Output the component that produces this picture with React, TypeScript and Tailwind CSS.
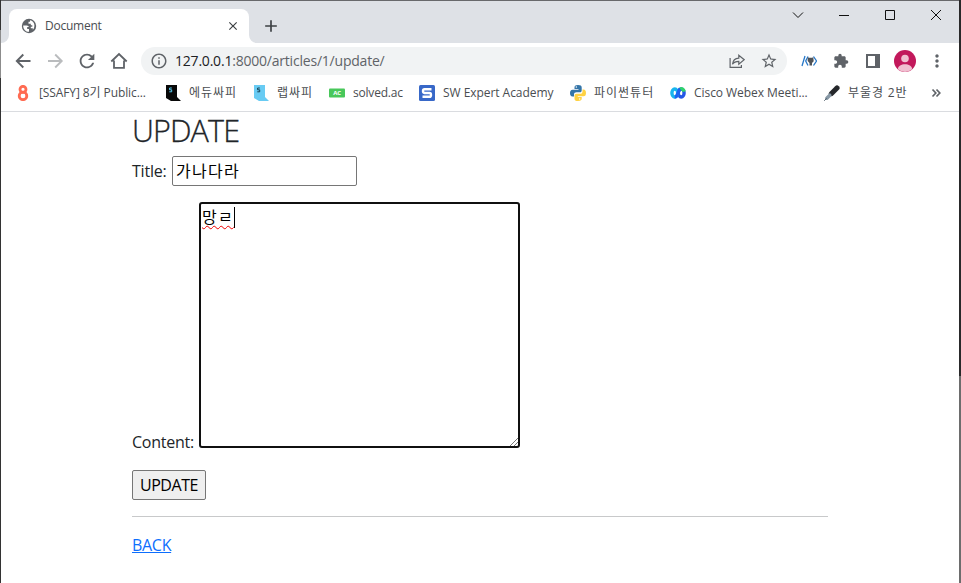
import React from "react";
import { MdArrowBack, MdArrowForward, MdRefresh, MdInfoOutline, MdStarBorder, MdExtension, MdMoreVert, MdClose, MdAdd } from "react-icons/md";

const UI = "font-['Open_Sans','Noto_Sans_CJK_KR',sans-serif]";

function TabStrip() {
  return (
    <div className="flex h-[42px] bg-[#dee1e6]">
      <svg className="mt-[34px] h-2 w-2 shrink-0" viewBox="0 0 8 8"><path d="M8 0v8H0a8 8 0 0 0 8-8z" fill="#fff" /></svg>
      <div className="mt-2 flex h-[34px] w-[240px] shrink-0 items-center rounded-t-lg bg-white pl-3 pr-[9px]">
        <svg width="16" height="16" viewBox="0 0 16 16">
          <circle cx="8" cy="8" r="7.2" fill="#5f6368" />
          <path d="M2.2 7.400h3.600q1.900 0 2.100 1.600H6.200v2H8v2.800C4.500 13.800 2.100 11 2.200 7.400zM9 2.200v1.600H7.500v2h2.300v1.500h1.500v1.400h-1.500v1.500h2v1.600c2.800-2.800 2.200-8.600-2.800-9.600z" fill="#fff" />
        </svg>
        <span className="ml-2 text-[12px] tracking-[-0.02em] text-[#4a4d51]">Document</span>
        <MdClose className="ml-auto h-[14px] w-[14px] text-[#3c4043]" />
      </div>
      <svg className="mt-[34px] h-2 w-2 shrink-0" viewBox="0 0 8 8"><path d="M0 0v8h8a8 8 0 0 1-8-8z" fill="#fff" /></svg>
      <MdAdd className="ml-[4px] mt-[15px] h-5 w-5 text-[#3c4043]" />
      <svg className="ml-auto mr-[15px] mt-[7px] h-[14px] w-[152px]" viewBox="0 0 152 14" fill="none" stroke="#111">
        <path d="M1 4.500l5 5 5-5M47 7.500h10" />
        <path d="M93.500 2.500h9v9h-9zM139 2l10 10M149 2l-10 10" />
      </svg>
    </div>
  );
}

function Toolbar() {
  return (
    <div className="flex h-9 items-center pl-[12px] pr-[11px] text-[#5f6368]">
      <svg className="h-5 w-5 shrink-0" viewBox="0 0 20 20" fill="none" stroke="currentColor" strokeWidth="1.900"><path d="M17.500 10H4.500M10.300 3.500L3.800 10l6.500 6.500" /></svg>
      <svg className="ml-3 h-5 w-5 shrink-0 text-[#babcbe]" viewBox="0 0 20 20" fill="none" stroke="currentColor" strokeWidth="1.900"><path d="M3 10h13M10.200 3.500l6.500 6.500-6.500 6.500" /></svg>
      <MdRefresh className="ml-[11px] h-[22px] w-[22px] shrink-0" />
      <svg className="ml-[12px] h-[18px] w-[18px] shrink-0" viewBox="0 0 18 18" fill="none" stroke="currentColor" strokeWidth="1.800">
        <path d="M1.300 9.500L9 2l7.700 7.500M4 8.500v7.300h10V8.500" />
      </svg>
      <div className="ml-[13px] flex h-7 w-[646px] shrink-0 items-center rounded-full bg-[#f1f3f4] pl-[9px] pr-[9px]">
        <MdInfoOutline className="h-[18px] w-[18px]" />
        <span className="ml-[7px] text-[14px] leading-5 tracking-[-0.015em]"><span className="text-[#202124]">127.0.0.1</span>:8000/articles/1/update/</span>
        <svg className="ml-auto h-4 w-4" viewBox="0 0 16 16" fill="none" stroke="currentColor" strokeWidth="1.200">
          <path d="M1.100 5v9.400h11.300V12M3.500 11.300c.4-4 2.800-5.900 6.300-6.100V2.200l5.400 4.500-5.400 4.500V8.300c-3 0-5 .8-6.300 3z" />
        </svg>
        <MdStarBorder className="ml-[15px] h-[18px] w-[18px]" />
      </div>
      <svg className="ml-[14px] h-4 w-4 shrink-0" viewBox="0 0 16 16" fill="none">
        <path d="M4 3L1 13M7 3.500L4.700 8 7 12.500M12.500 3.500L15.500 8l-3 4.500" stroke="#2878c8" strokeWidth="1.300" />
        <path d="M6.700 4.200l1.300.5h3l1.300-.5.400 4-1.700 1.800v2.500H8.500V10L6.700 8z" fill="#505357" />
      </svg>
      <MdExtension className="ml-4 h-4 w-4 shrink-0" />
      <svg className="ml-4 h-4 w-4 shrink-0" viewBox="0 0 16 16"><path fillRule="evenodd" d="M1 1h14v14H1zM3 3v10h7V3z" fill="currentColor" /></svg>
      <svg className="ml-[13px] h-[22px] w-[22px] shrink-0" viewBox="0 0 22 22">
        <circle cx="11" cy="11" r="11" fill="#c2185b" /><circle cx="11" cy="8.500" r="3.800" fill="#f0bfd0" />
        <path d="M3.900 19.300C3.900 12.700 18.100 12.700 18.100 19.300A11 11 0 0 1 3.900 19.300z" fill="#f0bfd0" />
      </svg>
      <MdMoreVert className="ml-[11px] h-5 w-5 shrink-0" />
    </div>
  );
}

function Bookmark({ icon, text, className }: { icon: React.ReactNode; text: string; className: string }) {
  return (
    <div className={"flex shrink-0 items-center " + className}>
      <svg className="mr-2 h-4 w-4 shrink-0" viewBox="0 0 16 16">{icon}</svg>
      <span className="whitespace-nowrap leading-4">{text}</span>
    </div>
  );
}

const webex = (
  <g fill="none" strokeWidth="3.400">
    <ellipse cx="11.200" cy="8" rx="2.900" ry="4" stroke="#2457e6" />
    <path d="M10 4c2-.7 3.700.5 4.200 2.700" stroke="#2fd36b" />
    <ellipse cx="4.800" cy="8" rx="2.900" ry="4" stroke="#17b5ee" />
    <path d="M4.700 12C8 12 7.600 6.500 10 4" stroke="#1c62f0" />
  </g>
);

function Bookmarks() {
  return (
    <div className="flex h-[33px] items-center border-b border-[#dadce0] pb-[4px] pl-[14px] text-[12px] text-[#4a4d51]">
      <Bookmark className="w-[150px] tracking-[-0.1px]" text="[SSAFY] 8기 Public..." icon={<g fill="none" stroke="#ff6b52" strokeWidth="2.800"><circle cx="8" cy="4.300" r="3" /><circle cx="8" cy="10.900" r="3.800" /></g>} />
      <Bookmark className="w-[88px] tracking-[1px]" text="에듀싸피" icon={<g><path d="M1 0h11v12l4 4H6l-5-3z" fill="#080808" /><path d="M6.800 3H4.600v1.800h2.100v2H4.300" fill="none" stroke="#5ccff5" /></g>} />
      <Bookmark className="w-[76px] tracking-[1px]" text="랩싸피" icon={<g><path d="M1 0h11v12l4 4H6l-5-3z" fill="#68cbf3" /><path d="M6.800 3H4.600v1.800h2.100v2H4.300" fill="none" stroke="#164052" /></g>} />
      <Bookmark className="w-[90px] tracking-[-0.2px]" text="solved.ac" icon={<g><rect y="3.500" width="16" height="9" rx="1" fill="#48c75a" /><text x="8" y="10.300" fontSize="6" fontWeight="bold" fill="#fff" textAnchor="middle">AC</text></g>} />
      <Bookmark className="w-[151px] tracking-[-0.05px]" text="SW Expert Academy" icon={<g><rect width="16" height="16" rx="1.500" fill="#3868c8" /><path d="M12.500 4.200h-7Q4 4.200 4 6t1.500 2h5q1.500 0 1.500 1.900t-1.500 1.900H3.500" fill="none" stroke="#fff" strokeWidth="2.400" /></g>} />
      <Bookmark className="w-[100px] tracking-[1px]" text="파이썬튜터" icon={<g><path d="M8 0C5 0 4.500 1 4.500 2.500V4h4v.7H2.700C.8 4.700 0 6 0 8s.8 3.500 2.500 3.500H4V9.500c0-1.500 1-2.300 2.500-2.300H10c1 0 1.700-.8 1.700-1.800v-3C11.700.8 10.500 0 8 0z" fill="#3475a8" /><path d="M8 16c3 0 3.700-1 3.700-2.500V12H7.800v-.7h5.700C15.300 11.300 16 10 16 8s-.8-3.500-2.500-3.500h-1V6.500c0 1.500-1 2.300-2.300 2.300H6.500c-1.200 0-2 .8-2 1.900v3C4.500 15.200 5.500 16 8 16z" fill="#ffd242" /><circle cx="6.300" cy="2" r=".7" fill="#fff" /><circle cx="9.700" cy="14" r=".7" fill="#fff" /></g>} />
      <Bookmark className="w-[154px] tracking-[-0.05px]" text="Cisco Webex Meeti..." icon={webex} />
      <Bookmark className="w-[107px] tracking-[0.9px]" text="부울경 2반" icon={<g strokeLinecap="round"><path d="M7.500 8.500l5.500-5.500" stroke="#25272b" strokeWidth="5.200" /><path d="M2.800 13.200l3-3" stroke="#8798a5" strokeWidth="3.500" /><path d="M.5 15.500l2-2" stroke="#53616d" /></g>} />
      <svg className="h-[10px] w-[10px]" viewBox="0 0 10 10" fill="none" stroke="#5f6368" strokeWidth="1.700"><path d="M1.500 1.500L4.800 5 1.500 8.500M5.500 1.500L8.800 5 5.500 8.500" /></svg>
    </div>
  );
}

export default function App() {
  return (
    <div className={"flex h-[583px] w-[961px] overflow-hidden bg-white " + UI}>
      <div className="flex w-px flex-col"><div className="h-[30px] bg-[#333]" /><div className="h-12 bg-[#8c8c8c]" /><div className="flex-1 bg-[#333]" /></div>
      <div className="flex min-w-0 flex-1 flex-col border-t border-[#68696c]">
        <TabStrip />
        <Toolbar />
        <Bookmarks />
        <main className="ml-[131px] w-[696px] text-[16px] leading-6 text-[#212529]">
          <h1 className="h-[38px] text-[30.500px] font-light leading-[36px] tracking-[-0.900px] [-webkit-text-stroke:0.3px_#212529]">UPDATE</h1>
          <div className="mt-[6px] flex h-[30px] items-center">
            <span className="w-10 tracking-[-0.2px]">Title:</span>
            <div className="flex h-[30px] w-[185px] items-center rounded-[2px] border border-[#767676] px-[3px] tracking-[1.300px] text-black">가나다라</div>
          </div>
          <div className="mt-4 flex h-[246px] items-end">
            <span className="mb-[-6px] w-[67px] tracking-[-0.250px]">Content:</span>
            <div className="relative h-[246px] w-[321px] rounded-[3px] border-2 border-[#101010] pl-[1px] pt-[1px] text-black">
              <span className="inline-block h-[21px] border-r border-black leading-[21px] tracking-[1.200px] underline decoration-[#f00000] decoration-wavy decoration-1 underline-offset-2">망ㄹ</span>
              <svg className="absolute bottom-0 right-0 h-2 w-2" viewBox="0 0 8 8" stroke="#555" strokeWidth=".8"><path d="M0 8l8-8M4 8l4-4" /></svg>
            </div>
          </div>
          <button className="mt-[22px] flex h-[30px] w-[74px] items-center justify-center rounded-[2px] border border-[#767676] bg-[#efefef] tracking-[-0.450px] text-black">UPDATE</button>
          <hr className="mt-4 border-[#c8c9ca]" />
          <a className="mt-4 inline-block tracking-[-0.3px] text-[#0d6efd] underline" href="#back">BACK</a>
        </main>
      </div>
      <div className="flex w-[2px] flex-col"><div className="h-[376px] bg-[#29292a]" /><div className="flex-1 bg-[#6d6d6d]" /></div>
    </div>
  );
}
